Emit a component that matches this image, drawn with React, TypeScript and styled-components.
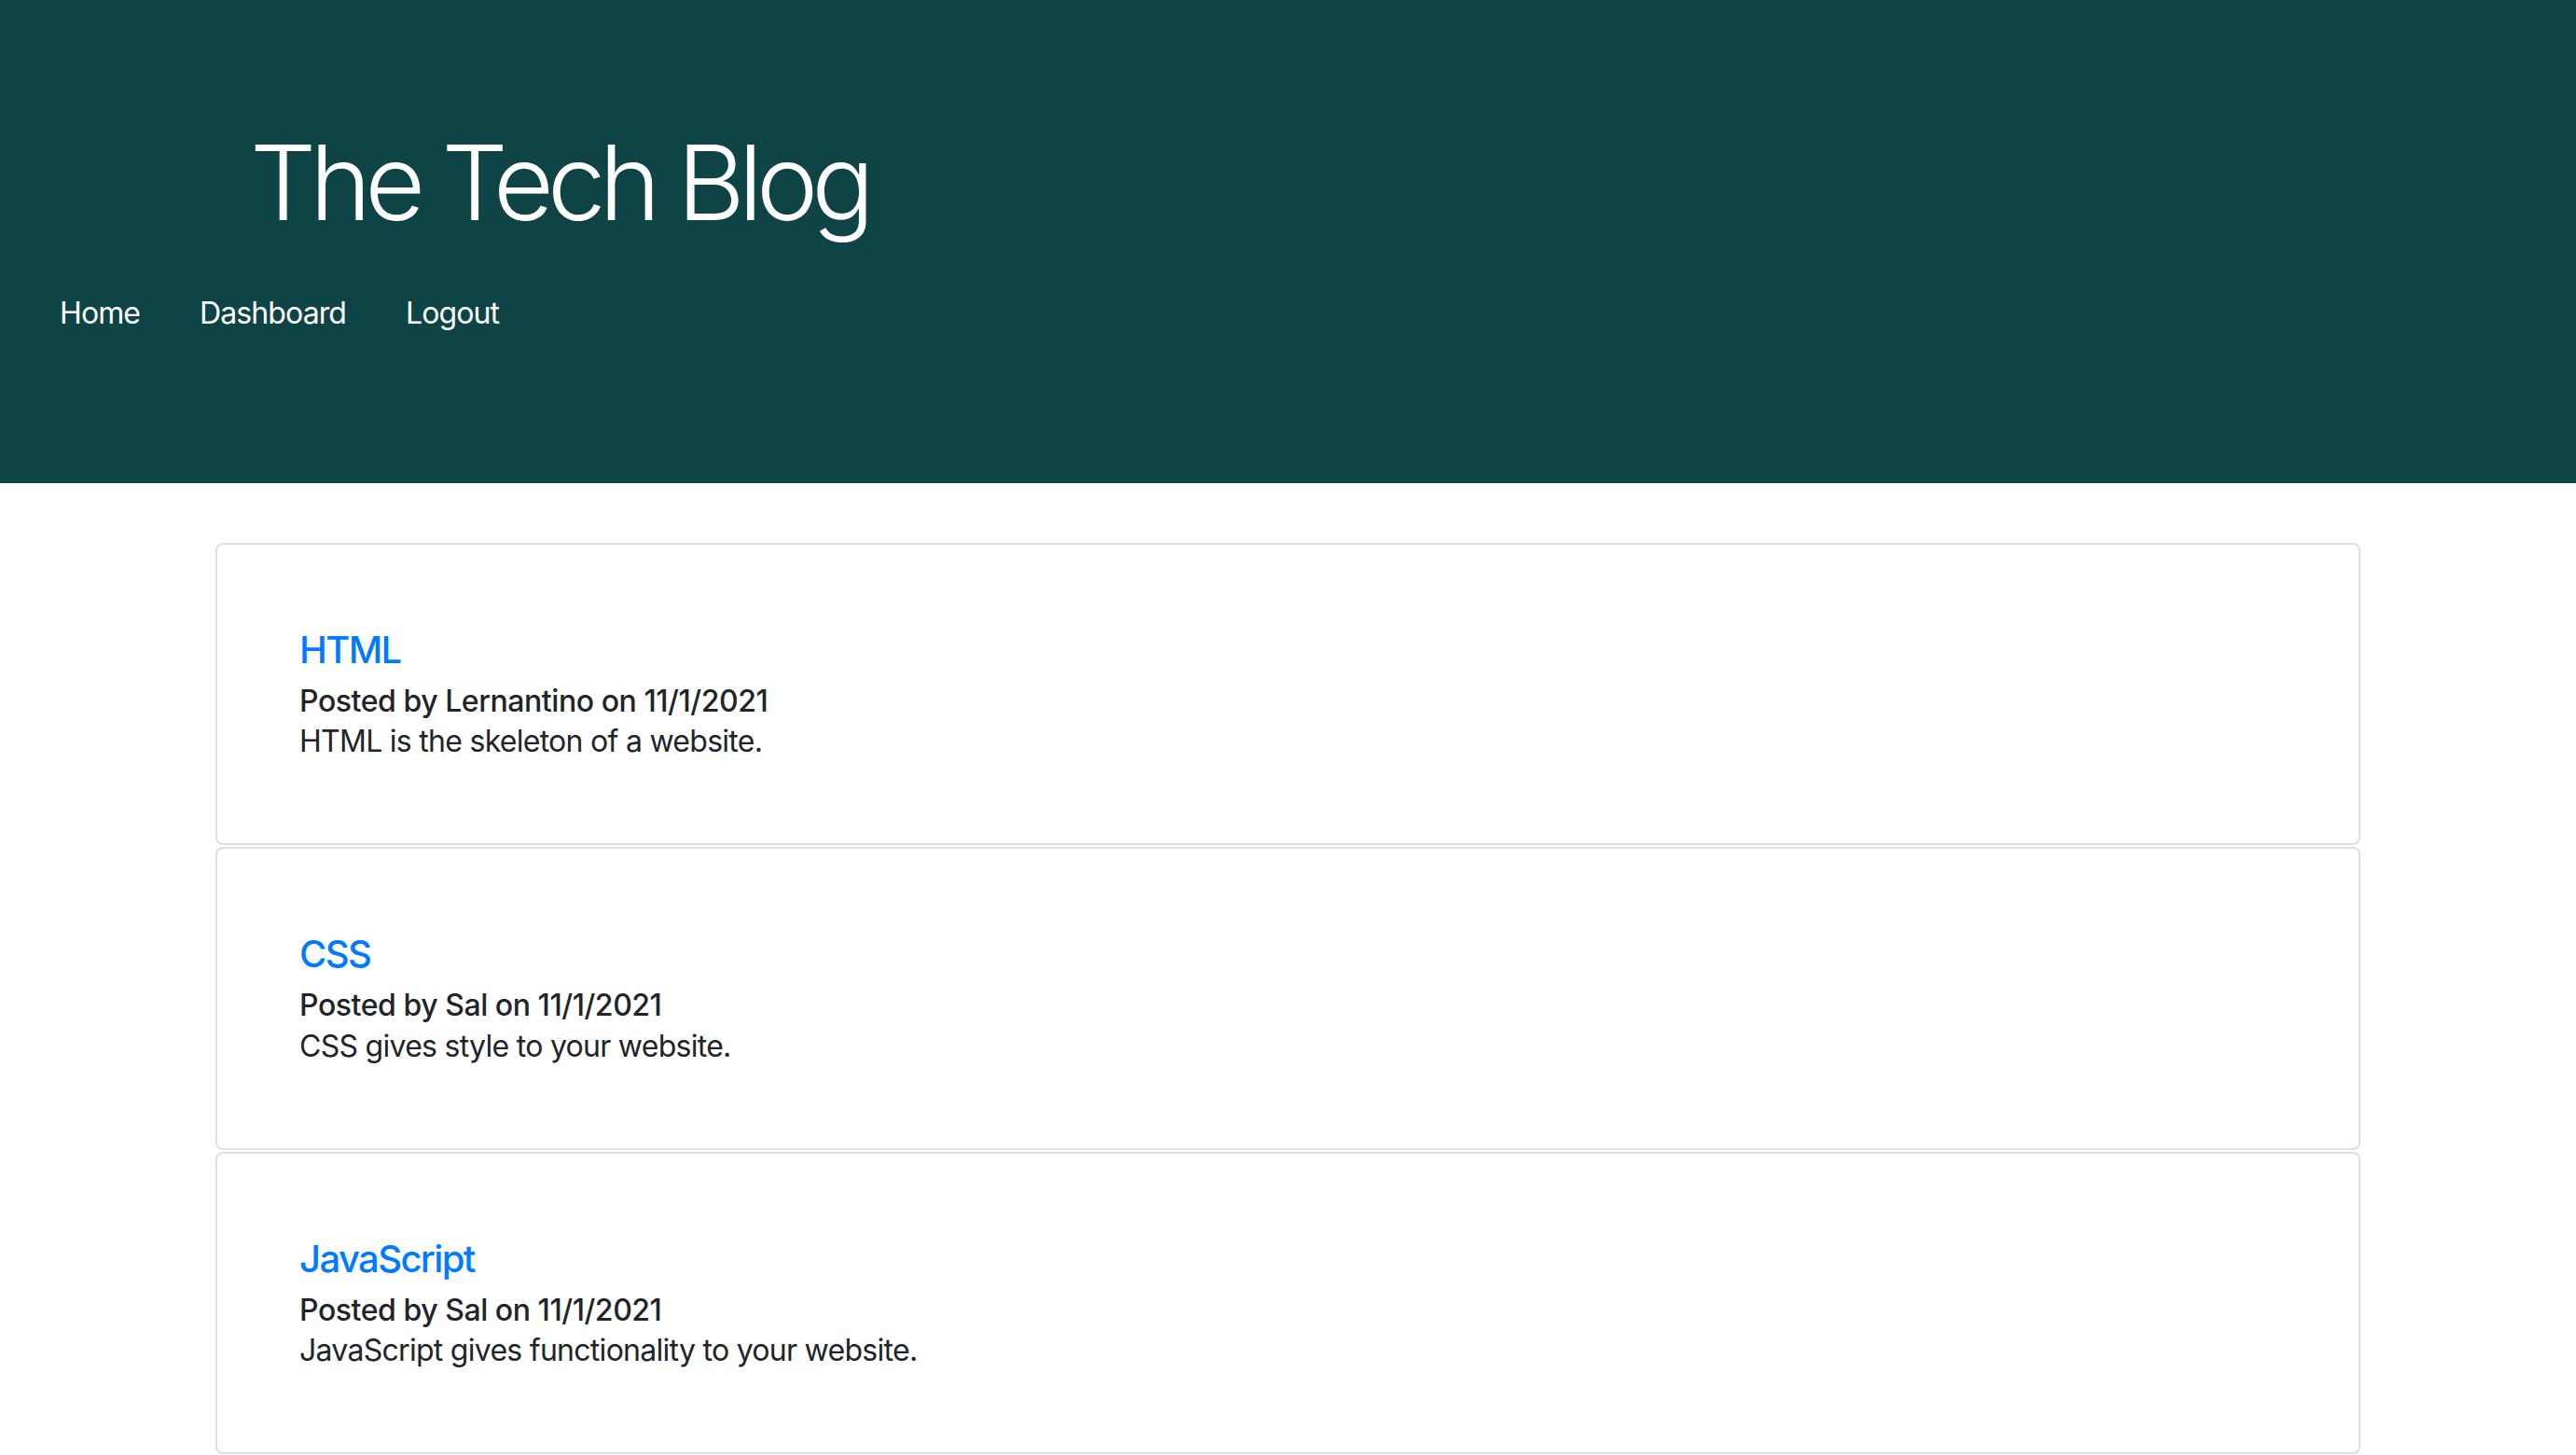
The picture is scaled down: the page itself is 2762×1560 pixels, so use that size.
import React from "react";
import styled, { createGlobalStyle } from "styled-components";

const GlobalStyle = createGlobalStyle`
  html, body {
    margin: 0;
    padding: 0;
    background: #ffffff;
  }
  body {
    font-family: Inter, "Noto Sans", "Liberation Sans", sans-serif;
    color: #212529;
  }
  * { box-sizing: border-box; }
`;

const Header = styled.header`
  background: #0e4446;
  height: 518px;
  padding-top: 128px;
`;

const TitleWrap = styled.div`
  padding-left: 268px;
`;

const SiteTitle = styled.h1`
  margin: 0 0 34px;
  font-size: 112px;
  font-weight: 300;
  line-height: 1.2;
  color: #ffffff;
  letter-spacing: -7px;
`;

const Nav = styled.nav`
  display: flex;
  padding-left: 32px;
`;

const NavLink = styled.a`
  display: block;
  padding: 16px 32px;
  font-size: 32px;
  line-height: 1.5;
  color: #ffffff;
  text-decoration: none;
  font-weight: 400;
  letter-spacing: -0.9px;
`;

const Main = styled.main`
  width: 2300px;
  margin: 64px auto 0;
`;

const Card = styled.article`
  border: 2px solid #dfdfdf;
  border-radius: 8px;
  padding: 89px 88px 85px;
  margin-bottom: 2px;
`;

const PostTitle = styled.a`
  display: block;
  margin: 0 0 12px;
  font-size: 40px;
  font-weight: 500;
  line-height: 1.2;
  color: #007bff;
  text-decoration: none;
  letter-spacing: -1.6px;
`;

const Meta = styled.h6`
  margin: 0;
  font-size: 32px;
  font-weight: 500;
  line-height: 1.2;
  color: #212529;
  letter-spacing: -0.45px;
`;

const Body = styled.p`
  margin: 0;
  font-size: 32px;
  font-weight: 400;
  line-height: 1.5;
  color: #212529;
  letter-spacing: -0.72px;
`;

const posts = [
  { title: "HTML", author: "Lernantino", date: "11/1/2021", body: "HTML is the skeleton of a website." },
  { title: "CSS", author: "Sal", date: "11/1/2021", body: "CSS gives style to your website." },
  { title: "JavaScript", author: "Sal", date: "11/1/2021", body: "JavaScript gives functionality to your website." },
];

export default function App() {
  return (
    <>
      <GlobalStyle />
      <Header>
        <TitleWrap>
          <SiteTitle>The Tech Blog</SiteTitle>
        </TitleWrap>
        <Nav>
          <NavLink href="#">Home</NavLink>
          <NavLink href="#">Dashboard</NavLink>
          <NavLink href="#">Logout</NavLink>
        </Nav>
      </Header>
      <Main>
        {posts.map((p) => (
          <Card key={p.title}>
            <PostTitle href="#">{p.title}</PostTitle>
            <Meta>
              Posted by {p.author} on {p.date}
            </Meta>
            <Body>{p.body}</Body>
          </Card>
        ))}
      </Main>
    </>
  );
}
